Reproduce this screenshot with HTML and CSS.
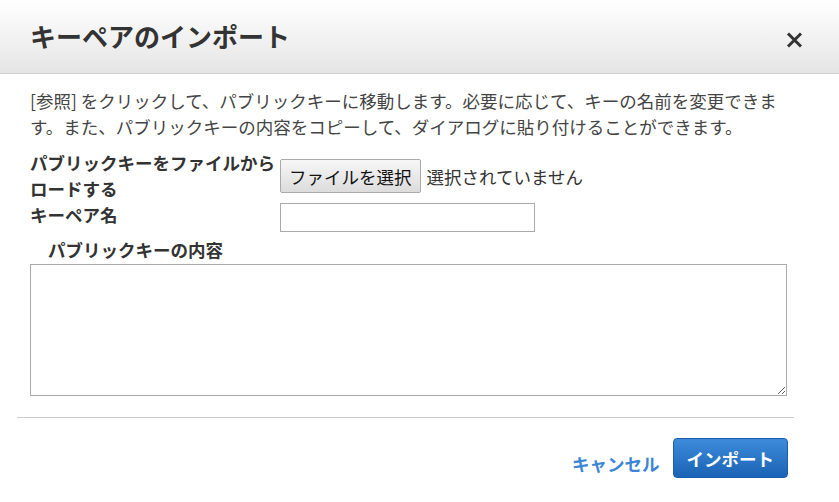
FILE: index.html
```html
<!DOCTYPE html>
<html lang="ja">
<head>
<meta charset="utf-8">
<title>キーペアのインポート</title>
<link rel="stylesheet" href="styles.css">
</head>
<body>
<div class="modal">
  <div class="header">
    <h1 class="title">キーペアのインポート</h1>
    <span class="close" aria-label="閉じる">
      <svg width="17" height="16" viewBox="0 0 17 16"><path d="M2 1.5 L15 14.5 M15 1.5 L2 14.5" stroke="#333" stroke-width="3" fill="none"/></svg>
    </span>
  </div>
  <div class="body">
    <p class="desc">[参照] をクリックして、パブリックキーに移動します。必要に応じて、キーの名前を変更できます。また、パブリックキーの内容をコピーして、ダイアログに貼り付けることができます。</p>
    <div class="form">
      <div class="row row-file">
        <label class="label">パブリックキーをファイルからロードする</label>
        <div class="control">
          <button class="file-btn" type="button">ファイルを選択</button>
          <span class="file-status">選択されていません</span>
        </div>
      </div>
      <div class="row row-name">
        <label class="label">キーペア名</label>
        <div class="control">
          <input class="text-input" type="text">
        </div>
      </div>
      <div class="row-content">
        <label class="label label-indent">パブリックキーの内容</label>
        <textarea class="key-area"></textarea>
      </div>
    </div>
  </div>
  <div class="sep"></div>
  <div class="footer">
    <a class="cancel" href="#">キャンセル</a>
    <button class="primary" type="button">インポート</button>
  </div>
</div>
</body>
</html>
```

FILE: styles.css
```css
html, body {
  margin: 0;
  padding: 0;
  background: #fff;
}
body {
  font-family: "Noto Sans CJK JP", "Noto Sans", sans-serif;
  color: #333;
  width: 839px;
  height: 502px;
  overflow: hidden;
}
.header {
  box-sizing: border-box;
  height: 74px;
  border-bottom: 1px solid #cfcfcf;
  background: linear-gradient(#ffffff, #e5e5e5);
  display: flex;
  align-items: center;
  justify-content: space-between;
  padding: 0 36px 0 30px;
}
.title {
  margin: 0;
  font-size: 26px;
  line-height: 30px;
  font-weight: bold;
  color: #333;
  margin-top: -1px;
}
.close {
  display: flex;
  margin-top: 7px;
}
.body {
  padding: 14px 52px 0 30px;
}
.desc {
  margin: 0;
  font-size: 17.5px;
  line-height: 26px;
  color: #444;
}
.form {
  margin-top: 10px;
}
.row {
  display: grid;
  grid-template-columns: 250px 1fr;
}
.label {
  font-size: 17.5px;
  line-height: 26px;
  font-weight: bold;
  color: #333;
  display: block;
}
.row-file .control {
  display: flex;
  align-items: center;
}
.file-btn {
  box-sizing: border-box;
  height: 34px;
  padding: 0 8px;
  font-family: inherit;
  font-size: 17.5px;
  color: #111;
  border: 1px solid #aaa;
  border-radius: 2px;
  background: linear-gradient(#f7f7f7, #dcdcdc);
}
.file-status {
  margin-left: 6px;
  font-size: 17.5px;
  color: #333;
}
.row-name .control {
  padding-top: 1px;
}
.text-input {
  box-sizing: border-box;
  display: block;
  width: 255px;
  height: 29px;
  border: 1px solid #aaa;
  margin: 0;
  padding: 0 4px;
}
.row-content {
  margin-top: 5px;
}
.label-indent {
  padding-left: 18px;
}
.key-area {
  display: block;
  box-sizing: border-box;
  width: 757px;
  height: 132px;
  margin: 1px 0 0 0;
  border: 1px solid #aaa;
  border-radius: 0;
  padding: 4px;
  font-family: inherit;
}
.sep {
  margin: 21px 45px 0 17px;
  border-top: 1px solid #cccccc;
}
.footer {
  display: flex;
  justify-content: flex-end;
  align-items: center;
  padding: 20px 51px 0 0;
}
.cancel {
  font-size: 17.5px;
  font-weight: bold;
  color: #3d85d6;
  text-decoration: none;
  margin-right: 13px;
  margin-top: 10px;
}
.primary {
  box-sizing: border-box;
  height: 40px;
  padding: 0 13px;
  font-family: inherit;
  font-size: 17.5px;
  font-weight: bold;
  color: #fff;
  background: linear-gradient(#3e8bda, #1a63b6);
  border: 1px solid #1b5da8;
  border-radius: 4px;
}
```
